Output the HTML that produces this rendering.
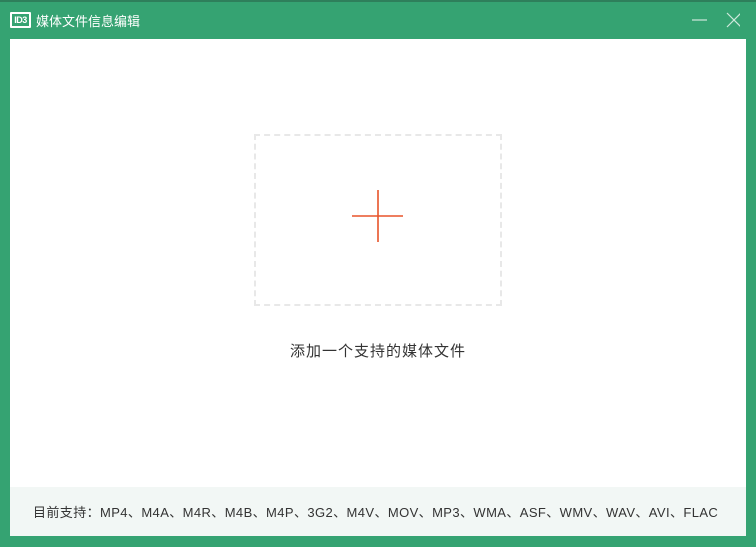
<!DOCTYPE html>
<html><head><meta charset="utf-8"><style>
body{margin:0;width:756px;height:547px;background:#35a372;position:relative;overflow:hidden;font-family:"Liberation Sans","Noto Sans CJK SC",sans-serif}
.top{position:absolute;left:0;top:0;width:756px;height:2px;background:#2e7f5b}
.logo{position:absolute;left:10px;top:12px;width:17px;height:12px;border:2px solid #fff;border-radius:1px;color:#fff;font-size:9px;font-weight:bold;line-height:12px;text-align:center;letter-spacing:-0.5px}
.title{position:absolute;left:36px;top:11px;color:#fff;font-size:13px}
.main{position:absolute;left:10px;top:39px;width:736px;height:448px;background:#fff}
.foot{position:absolute;left:10px;top:487px;width:736px;height:49px;background:#f2f7f5;font-size:13px;color:#333;line-height:52px;padding-left:23px;box-sizing:border-box;letter-spacing:0.4px;white-space:nowrap}
.box{position:absolute;left:254px;top:134px;width:244px;height:168px;border:2px dashed #e8e8e8}
.label{position:absolute;left:0;width:756px;top:340px;text-align:center;font-size:15px;color:#333;letter-spacing:1px}
</style></head><body>
<div class="top"></div>
<div class="logo">ID3</div>
<div class="title">媒体文件信息编辑</div>
<svg style="position:absolute;left:690px;top:12px" width="50" height="16"><line x1="2" y1="8" x2="17" y2="8" stroke="#cfe8dc" stroke-width="1.2"/><line x1="37" y1="1" x2="51" y2="15" stroke="#cfe8dc" stroke-width="1.2"/><line x1="51" y1="1" x2="37" y2="15" stroke="#cfe8dc" stroke-width="1.2"/></svg>
<div class="main"></div>
<div class="box"></div>
<svg style="position:absolute;left:352px;top:190px" width="52" height="52"><line x1="0" y1="26" x2="51" y2="26" stroke="#e8542a" stroke-width="1.6"/><line x1="26" y1="0" x2="26" y2="52" stroke="#e8542a" stroke-width="1.6"/></svg>
<div class="label">添加一个支持的媒体文件</div>
<div class="foot">目前支持：MP4、M4A、M4R、M4B、M4P、3G2、M4V、MOV、MP3、WMA、ASF、WMV、WAV、AVI、FLAC</div>
</body></html>
